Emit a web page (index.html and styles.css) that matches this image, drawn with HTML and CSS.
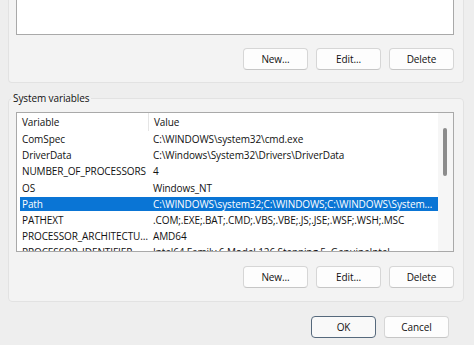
FILE: index.html
```html
<!DOCTYPE html>
<html>
<head>
    <title>Environment Variables</title>
    <link rel="stylesheet" href="styles.css">
</head>
<body>

<div class="dialog">

    <!-- User variables (scrolled off the top) -->
    <div class="group group-user">
        <div class="listbox listbox-user"></div>
        <div class="buttons">
            <button class="btn">New...</button>
            <button class="btn">Edit...</button>
            <button class="btn">Delete</button>
        </div>
    </div>

    <!-- System variables -->
    <fieldset class="group group-system">
        <legend>System variables</legend>
        <div class="listbox listbox-system">
            <div class="list-body">
                <div class="list-head">
                    <span class="col-var">Variable</span>
                    <span class="col-val">Value</span>
                </div>
                <div class="list-row"><span class="col-var">ComSpec</span><span class="col-val">C:\WINDOWS\system32\cmd.exe</span></div>
                <div class="list-row"><span class="col-var">DriverData</span><span class="col-val">C:\Windows\System32\Drivers\DriverData</span></div>
                <div class="list-row"><span class="col-var">NUMBER_OF_PROCESSORS</span><span class="col-val">4</span></div>
                <div class="list-row"><span class="col-var">OS</span><span class="col-val">Windows_NT</span></div>
                <div class="list-row selected"><span class="col-var">Path</span><span class="col-val">C:\WINDOWS\system32;C:\WINDOWS;C:\WINDOWS\System32\Wbem</span></div>
                <div class="list-row"><span class="col-var">PATHEXT</span><span class="col-val">.COM;.EXE;.BAT;.CMD;.VBS;.VBE;.JS;.JSE;.WSF;.WSH;.MSC</span></div>
                <div class="list-row"><span class="col-var">PROCESSOR_ARCHITECTURE</span><span class="col-val">AMD64</span></div>
                <div class="list-row"><span class="col-var">PROCESSOR_IDENTIFIER</span><span class="col-val">Intel64 Family 6 Model 126 Stepping 5, GenuineIntel</span></div>
            </div>
            <div class="scrollbar"><div class="thumb"></div></div>
        </div>
        <div class="buttons">
            <button class="btn">New...</button>
            <button class="btn">Edit...</button>
            <button class="btn">Delete</button>
        </div>
    </fieldset>

    <div class="footer">
        <button class="btn btn-default">OK</button>
        <button class="btn">Cancel</button>
    </div>
</div>

</body>
</html>
```

FILE: styles.css
```css
body {
    margin: 0;
    padding: 0;
    background-color: #eeeeee;
    font-family: "Open Sans", "Noto Sans", sans-serif;
    font-size: 10px;
    letter-spacing: -0.1px;
    color: #111;
}

.dialog {
    width: 474px;
    height: 345px;
    overflow: hidden;
}

/* Group boxes */
.group {
    margin: 0 10px 0 8px;
    background-color: #f3f3f3;
    border: 1px solid #e2e2e2;
    border-radius: 4px;
}

.group-user {
    border-top: none;
    border-radius: 0 0 4px 4px;
    padding: 0 9px 12px 7px;
}

.group-system {
    margin-top: 7px;
    padding: 6px 9px 13px 7px;
    min-width: 0;
}

.group-system legend {
    padding: 0 2px;
    margin-left: -5px;
    line-height: 16px;
    font-size: 10px;
}

/* List boxes */
.listbox {
    background-color: #fff;
    border: 1px solid #a9a9a9;
    box-sizing: border-box;
}

.listbox-user {
    height: 35px;
    border-top: none;
}

.listbox-system {
    height: 140px;
    display: flex;
    overflow: hidden;
}

.list-body {
    flex-grow: 1;
    padding-left: 3px;
    overflow: hidden;
}

.list-head,
.list-row {
    display: flex;
    white-space: nowrap;
}

.list-head {
    height: 18px;
    line-height: 18px;
}

.list-head .col-var {
    width: 126px;
    padding-left: 2px;
    border-right: 1px solid #e5e5e5;
}

.list-head .col-val {
    padding-left: 5px;
}

.list-row {
    height: 16.2px;
    line-height: 16px;
}

.list-row .col-var {
    width: 127px;
    padding-left: 2px;
    overflow: hidden;
    text-overflow: ellipsis;
    flex-shrink: 0;
}

.list-row .col-val {
    flex-grow: 1;
    padding-left: 4px;
    padding-right: 2px;
    overflow: hidden;
    text-overflow: ellipsis;
}

.list-row.selected {
    background-color: #0a75d5;
    background-clip: content-box;
    padding: 1px 0;
    box-sizing: border-box;
    color: #fff;
}

.list-row.selected span {
    line-height: 14px;
}

.scrollbar {
    width: 15px;
    flex-shrink: 0;
    background-color: #f6f6f6;
    padding-top: 15px;
}

.thumb {
    width: 4px;
    height: 48px;
    margin-left: 5px;
    border-radius: 2px;
    background-color: #8c8c8c;
}

/* Buttons */
.buttons {
    display: flex;
    justify-content: flex-end;
    gap: 8px;
    margin-top: 13px;
}

.group-system .buttons {
    margin-top: 14px;
}

.btn {
    width: 65px;
    height: 22px;
    padding: 0;
    font-family: inherit;
    font-size: 10px;
    letter-spacing: -0.1px;
    color: #111;
    background-color: #fdfdfd;
    border: 1px solid #d6d6d6;
    border-bottom-color: #c6c6c6;
    border-radius: 4px;
}

.btn-default {
    background-color: #f9f9f9;
    border: 1px solid #56697c;
}

.footer {
    display: flex;
    justify-content: flex-end;
    gap: 8px;
    margin-top: 14px;
    padding-right: 25px;
}
```
